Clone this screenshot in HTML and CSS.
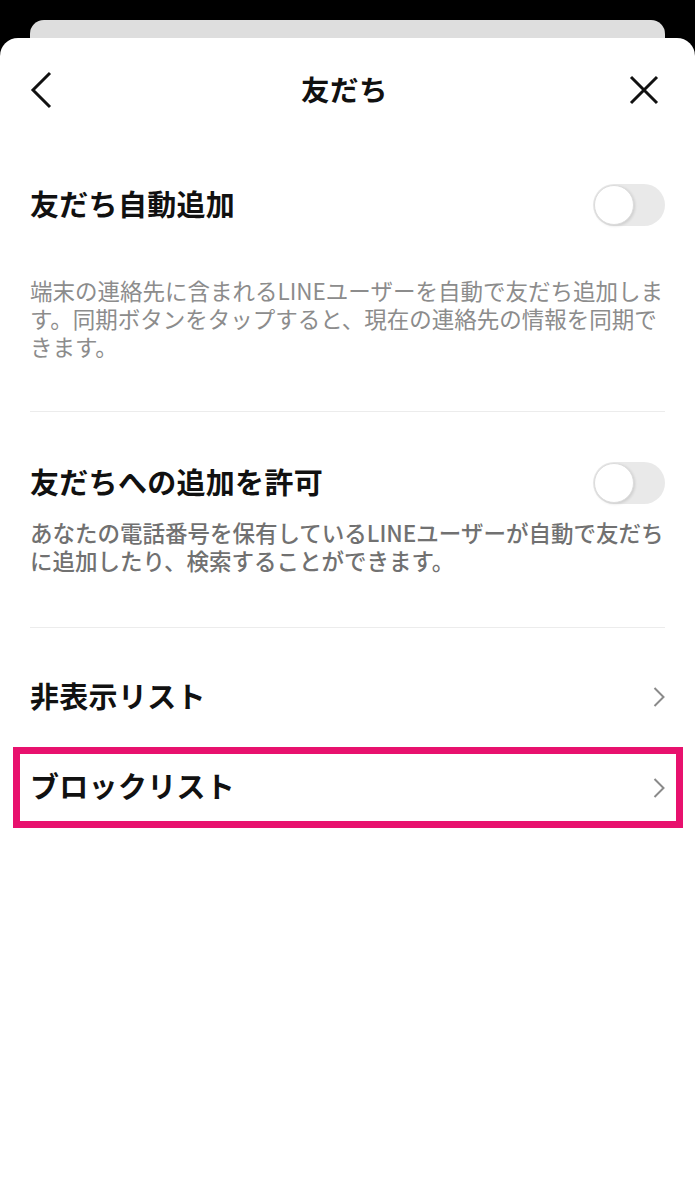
FILE: index.html
```html
<!DOCTYPE html>
<html lang="ja">
<head>
    <meta charset="UTF-8">
    <meta name="viewport" content="width=device-width, initial-scale=1.0">
    <title>友だち</title>
    <link rel="stylesheet" href="styles.css">
</head>
<body>
    <div class="back-card"></div>
    <div class="sheet">
        <div class="header">
            <svg class="back" width="22" height="38" viewBox="0 0 22 38">
                <path d="M20 2 L3 19 L20 36" fill="none" stroke="#111" stroke-width="3" stroke-linejoin="miter"/>
            </svg>
            <div class="title">友だち</div>
            <svg class="close" width="30" height="30" viewBox="0 0 30 30">
                <path d="M2 2 L28 28 M28 2 L2 28" fill="none" stroke="#111" stroke-width="3"/>
            </svg>
        </div>

        <div class="section first">
            <div class="toggle-row">
                <span class="label">友だち自動追加</span>
                <div class="toggle"><div class="knob"></div></div>
            </div>
            <p class="desc light">端末の連絡先に含まれるLINEユーザーを自動で友だち追加します。同期ボタンをタップすると、現在の連絡先の情報を同期できます。</p>
        </div>

        <div class="divider"></div>

        <div class="section second">
            <div class="toggle-row">
                <span class="label">友だちへの追加を許可</span>
                <div class="toggle"><div class="knob"></div></div>
            </div>
            <p class="desc dark">あなたの電話番号を保有しているLINEユーザーが自動で友だちに追加したり、検索することができます。</p>
        </div>

        <div class="divider"></div>

        <div class="list">
            <div class="item">
                <span class="label">非表示リスト</span>
                <svg class="chev" width="12" height="20" viewBox="0 0 12 20">
                    <path d="M1.5 1 L10.5 10 L1.5 19" fill="none" stroke="#8a8a8a" stroke-width="2"/>
                </svg>
            </div>
            <div class="item highlight">
                <span class="label">ブロックリスト</span>
                <svg class="chev" width="12" height="20" viewBox="0 0 12 20">
                    <path d="M1.5 1 L10.5 10 L1.5 19" fill="none" stroke="#8a8a8a" stroke-width="2"/>
                </svg>
            </div>
        </div>
    </div>
</body>
</html>
```

FILE: styles.css
```css
body {
    margin: 0;
    background-color: black;
    font-family: "Noto Sans CJK JP", "Noto Sans", sans-serif;
    color: #111;
}
.back-card {
    height: 18px;
    margin: 20px 30px 0;
    background-color: #dedede;
    border-radius: 14px 14px 0 0;
}
.sheet {
    background-color: white;
    border-radius: 18px 18px 0 0;
    min-height: 1162px;
}
.header {
    height: 104px;
    padding: 0 36px 0 30px;
    display: grid;
    grid-template-columns: 1fr auto 1fr;
    align-items: center;
}
.header .close {
    justify-self: end;
}
.title {
    font-size: 28.5px;
    font-weight: 700;
    letter-spacing: 0.5px;
    padding-bottom: 4px;
}
.section {
    margin: 0 30px;
}
.section.first {
    padding-top: 40px;
}
.section.second {
    padding-top: 48px;
}
.toggle-row {
    height: 46px;
    display: flex;
    align-items: center;
    justify-content: space-between;
}
.label {
    font-size: 29px;
    font-weight: 700;
    letter-spacing: 0.3px;
    padding-bottom: 5px;
}
.toggle {
    width: 72px;
    height: 42px;
    border-radius: 21px;
    background-color: #e9e9e9;
    display: flex;
    align-items: center;
    padding: 0 1px;
    box-sizing: border-box;
}
.knob {
    width: 40px;
    height: 40px;
    border-radius: 50%;
    background-color: white;
    border: 1px solid #dcdcdc;
    box-sizing: border-box;
    box-shadow: 1px 1px 3px rgba(0, 0, 0, 0.12);
}
.desc {
    margin: 0;
    font-size: 22.5px;
    line-height: 28px;
}
.desc.light {
    margin-top: 48px;
    color: #8c8c8c;
}
.desc.dark {
    margin-top: 12px;
    color: #717171;
    font-weight: 500;
}
.divider {
    height: 1px;
    margin: 0 30px;
    background-color: #ececec;
}
.section.first + .divider {
    margin-top: 51px;
}
.section.second + .divider {
    margin-top: 53px;
}
.list {
    padding-top: 29px;
}
.item {
    height: 80px;
    margin: 0 30px;
    display: flex;
    align-items: center;
    justify-content: space-between;
}
.item.highlight {
    margin: 10px 12px 0 13px;
    height: 67px;
    padding: 0 11px 0 10px;
    border: 7px solid #e8116e;
}
```
